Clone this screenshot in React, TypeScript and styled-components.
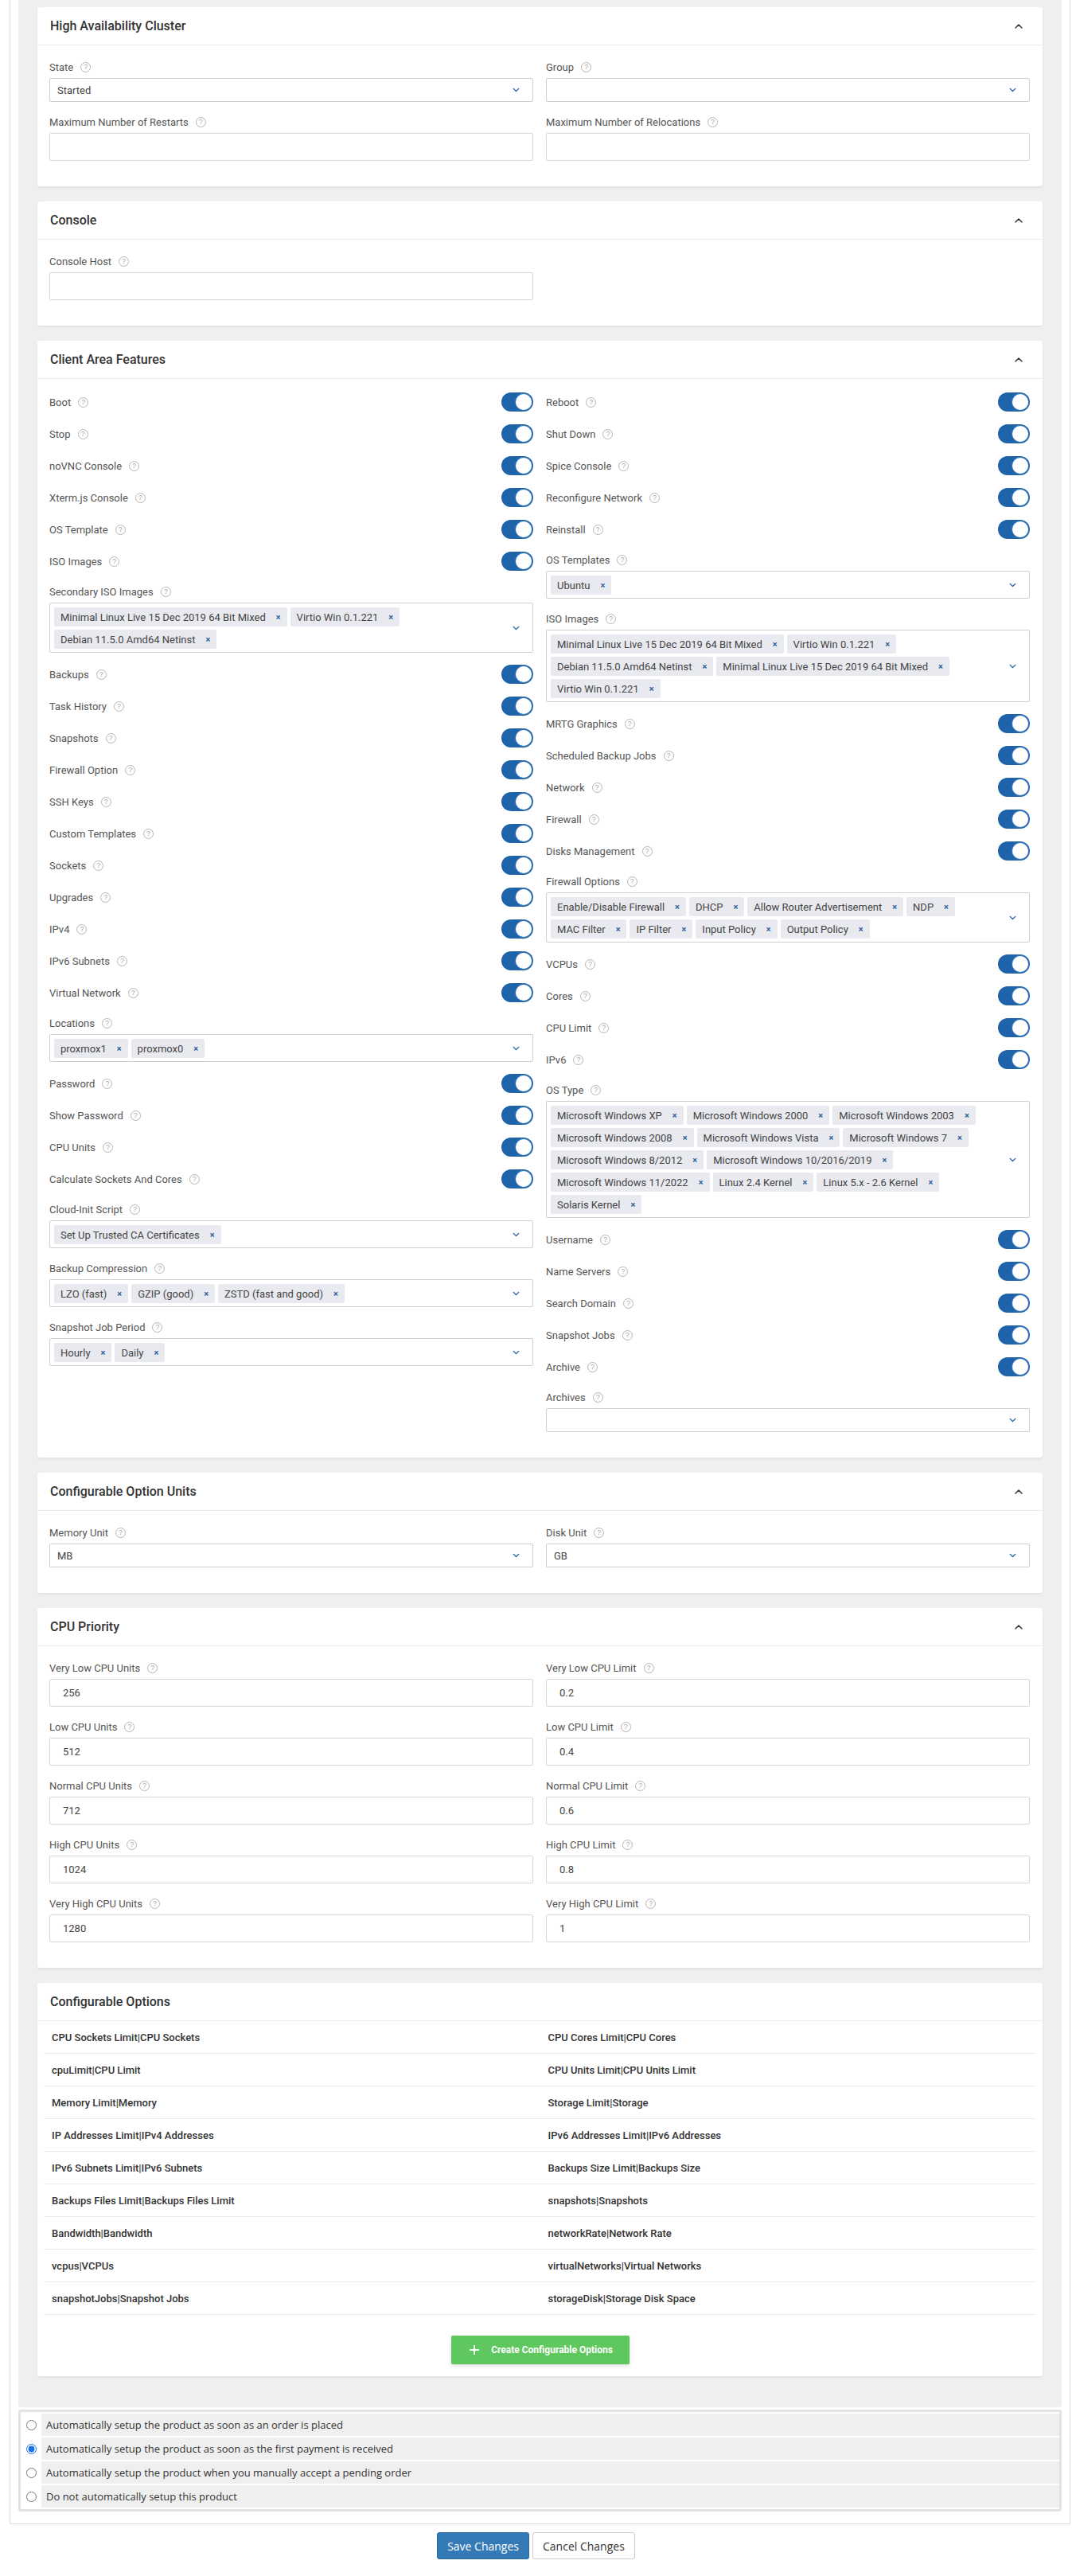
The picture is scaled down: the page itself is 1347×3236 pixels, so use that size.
import React from "react";
import styled, { createGlobalStyle } from "styled-components";
import { ChevronUp, ChevronDown, Plus } from "lucide-react";

const Global = createGlobalStyle`
  html, body { margin: 0; padding: 0; background: #fff; }
  body { font-family: Roboto, "Liberation Sans", sans-serif; color: #555; }
  * { box-sizing: border-box; }
`;

const Panel = styled.div`
  margin: 0 2px 0 12px;
  border-left: 1px solid #ddd;
  border-right: 1px solid #ddd;
  border-bottom: 1px solid #ddd;
  padding: 0 10px 15px 10px;
`;

const Grey = styled.div`
  background: #efefef;
  padding: 9px 24px 39px 24px;
  border-radius: 0 0 4px 4px;
  display: flex;
  flex-direction: column;
  gap: 19px;
`;

const Card = styled.section`
  background: #fff;
  border-radius: 3px;
  box-shadow: 0 2px 3px rgba(0, 0, 0, 0.06);
`;

const CardHeader = styled.div`
  height: 48px;
  display: flex;
  align-items: center;
  justify-content: space-between;
  padding: 0 22px 0 16px;
  border-bottom: 1px solid #ececec;
`;

const Title = styled.h3`
  margin: 0;
  font-size: 16px;
  font-weight: 500;
  color: #333;
`;

const Body = styled.div`
  display: grid;
  grid-template-columns: 1fr 1fr;
  column-gap: 16px;
  padding: 9px 16px 25px 15px;
  align-items: start;
`;

const Col = styled.div`
  display: flex;
  flex-direction: column;
`;

const LabelText = styled.span`
  font-size: 13px;
  color: #555;
  display: inline-flex;
  align-items: center;
  gap: 9px;
`;

const Help = styled.span`
  width: 13px;
  height: 13px;
  border: 1px solid #b5b5b5;
  border-radius: 50%;
  font-size: 9px;
  line-height: 11px;
  text-align: center;
  color: #aaa;
  font-family: "Liberation Sans", sans-serif;
`;

const Label = ({ t }: { t: string }) => (
  <LabelText>
    {t}
    <Help>?</Help>
  </LabelText>
);

const ToggleRowWrap = styled.div`
  height: 40px;
  display: flex;
  align-items: center;
  justify-content: space-between;
`;

const Switch = styled.span`
  width: 40px;
  height: 24px;
  border-radius: 12px;
  background: #1f63aa;
  display: flex;
  align-items: center;
  justify-content: flex-end;
  padding: 2px;
  &::after {
    content: "";
    width: 20px;
    height: 20px;
    border-radius: 50%;
    background: #fff;
    box-shadow: 0 0 0 1px #3a78bb;
  }
`;

const Toggle = ({ t }: { t: string }) => (
  <ToggleRowWrap>
    <Label t={t} />
    <Switch />
  </ToggleRowWrap>
);

const FieldWrap = styled.div`
  padding-top: 8px;
  margin-bottom: 7px;
  display: flex;
  flex-direction: column;
  gap: 4px;
`;

const LabelLine = styled.div`
  height: 20px;
  display: flex;
  align-items: center;
`;

const Box = styled.div<{ $h?: number; $tags?: boolean }>`
  border: 1px solid #cfcfcf;
  border-radius: 2px;
  min-height: ${(p) => p.$h || 30}px;
  position: relative;
  display: flex;
  flex-wrap: wrap;
  align-items: center;
  padding: ${(p) => (p.$tags ? "3px 40px 2px 5px" : "0 40px 0 9px")};
  font-size: 13px;
  color: #444;
`;

const Chevron = styled.span`
  position: absolute;
  right: 14px;
  top: 50%;
  transform: translateY(-50%);
  display: flex;
  color: #1f5fa5;
`;

const Tag = styled.span`
  height: 24px;
  margin: 2px 4px 2px 0;
  background: #e9eaf0;
  border-radius: 2px;
  padding: 0 8px;
  display: inline-flex;
  align-items: center;
  gap: 13px;
  font-size: 13px;
  color: #444;
  white-space: nowrap;
`;

const TagX = styled.span`
  color: #2a5fa0;
  font-size: 11px;
  font-weight: 700;
`;

const Inp = styled.div`
  border: 1px solid #d6d6dc;
  border-radius: 2px;
  height: 35px;
  display: flex;
  align-items: center;
  padding-left: 16px;
  font-size: 13px;
  color: #444;
`;

type Item =
  | { k: "t"; t: string }
  | { k: "m"; t: string; tags: string[] }
  | { k: "s"; t: string; v: string }
  | { k: "i"; t: string; v?: string };

const Field = ({ it }: { it: Item }) => {
  if (it.k === "t") return <Toggle t={it.t} />;
  return (
    <FieldWrap>
      <LabelLine>
        <Label t={it.t} />
      </LabelLine>
      {it.k === "m" && (
        <Box $tags $h={it.tags.length ? 35 : 30}>
          {it.tags.map((g, i) => (
            <Tag key={i}>
              {g}
              <TagX>×</TagX>
            </Tag>
          ))}
          <Chevron>
            <ChevronDown size={13} strokeWidth={2.5} />
          </Chevron>
        </Box>
      )}
      {it.k === "s" && (
        <Box>
          {it.v}
          <Chevron>
            <ChevronDown size={13} strokeWidth={2.5} />
          </Chevron>
        </Box>
      )}
      {it.k === "i" && <Inp>{it.v || ""}</Inp>}
    </FieldWrap>
  );
};

const t = (s: string): Item => ({ k: "t", t: s });
const m = (s: string, tags: string[]): Item => ({ k: "m", t: s, tags });

const Section = ({ title, left, right }: { title: string; left: Item[]; right: Item[] }) => (
  <Card>
    <CardHeader>
      <Title>{title}</Title>
      <ChevronUp size={16} strokeWidth={2.2} color="#333" />
    </CardHeader>
    <Body>
      <Col>{left.map((it, i) => <Field key={i} it={it} />)}</Col>
      <Col>{right.map((it, i) => <Field key={i} it={it} />)}</Col>
    </Body>
  </Card>
);

const ML = "Minimal Linux Live 15 Dec 2019 64 Bit Mixed";
const VW = "Virtio Win 0.1.221";
const DB = "Debian 11.5.0 Amd64 Netinst";

const caLeft: Item[] = [
  t("Boot"), t("Stop"), t("noVNC Console"), t("Xterm.js Console"), t("OS Template"), t("ISO Images"),
  m("Secondary ISO Images", [ML, VW, DB]),
  t("Backups"), t("Task History"), t("Snapshots"), t("Firewall Option"), t("SSH Keys"), t("Custom Templates"),
  t("Sockets"), t("Upgrades"), t("IPv4"), t("IPv6 Subnets"), t("Virtual Network"),
  m("Locations", ["proxmox1", "proxmox0"]),
  t("Password"), t("Show Password"), t("CPU Units"), t("Calculate Sockets And Cores"),
  m("Cloud-Init Script", ["Set Up Trusted CA Certificates"]),
  m("Backup Compression", ["LZO (fast)", "GZIP (good)", "ZSTD (fast and good)"]),
  m("Snapshot Job Period", ["Hourly", "Daily"]),
];

const caRight: Item[] = [
  t("Reboot"), t("Shut Down"), t("Spice Console"), t("Reconfigure Network"), t("Reinstall"),
  m("OS Templates", ["Ubuntu"]),
  m("ISO Images", [ML, VW, DB, ML, VW]),
  t("MRTG Graphics"), t("Scheduled Backup Jobs"), t("Network"), t("Firewall"), t("Disks Management"),
  m("Firewall Options", ["Enable/Disable Firewall", "DHCP", "Allow Router Advertisement", "NDP", "MAC Filter", "IP Filter", "Input Policy", "Output Policy"]),
  t("VCPUs"), t("Cores"), t("CPU Limit"), t("IPv6"),
  m("OS Type", [
    "Microsoft Windows XP", "Microsoft Windows 2000", "Microsoft Windows 2003", "Microsoft Windows 2008",
    "Microsoft Windows Vista", "Microsoft Windows 7", "Microsoft Windows 8/2012", "Microsoft Windows 10/2016/2019",
    "Microsoft Windows 11/2022", "Linux 2.4 Kernel", "Linux 5.x - 2.6 Kernel", "Solaris Kernel",
  ]),
  t("Username"), t("Name Servers"), t("Search Domain"), t("Snapshot Jobs"), t("Archive"),
  m("Archives", []),
];

const cpuLeft: Item[] = [
  { k: "i", t: "Very Low CPU Units", v: "256" },
  { k: "i", t: "Low CPU Units", v: "512" },
  { k: "i", t: "Normal CPU Units", v: "712" },
  { k: "i", t: "High CPU Units", v: "1024" },
  { k: "i", t: "Very High CPU Units", v: "1280" },
];
const cpuRight: Item[] = [
  { k: "i", t: "Very Low CPU Limit", v: "0.2" },
  { k: "i", t: "Low CPU Limit", v: "0.4" },
  { k: "i", t: "Normal CPU Limit", v: "0.6" },
  { k: "i", t: "High CPU Limit", v: "0.8" },
  { k: "i", t: "Very High CPU Limit", v: "1" },
];

const opts: [string, string][] = [
  ["CPU Sockets Limit|CPU Sockets", "CPU Cores Limit|CPU Cores"],
  ["cpuLimit|CPU Limit", "CPU Units Limit|CPU Units Limit"],
  ["Memory Limit|Memory", "Storage Limit|Storage"],
  ["IP Addresses Limit|IPv4 Addresses", "IPv6 Addresses Limit|IPv6 Addresses"],
  ["IPv6 Subnets Limit|IPv6 Subnets", "Backups Size Limit|Backups Size"],
  ["Backups Files Limit|Backups Files Limit", "snapshots|Snapshots"],
  ["Bandwidth|Bandwidth", "networkRate|Network Rate"],
  ["vcpus|VCPUs", "virtualNetworks|Virtual Networks"],
  ["snapshotJobs|Snapshot Jobs", "storageDisk|Storage Disk Space"],
];

const OptList = styled.div`
  padding: 0 8px;
`;
const OptRow = styled.div`
  display: grid;
  grid-template-columns: 1fr 1fr;
  height: 41px;
  align-items: center;
  border-bottom: 1px solid #ececec;
`;
const OptCell = styled.div`
  padding-left: 10px;
  font-size: 13px;
  font-weight: 500;
  color: #333;
`;
const BtnRow = styled.div`
  display: flex;
  justify-content: center;
  padding: 26px 0 15px;
`;
const GreenBtn = styled.button`
  height: 36px;
  width: 224px;
  border: none;
  border-radius: 2px;
  background: #5ec85e;
  color: #fff;
  font-family: Roboto, sans-serif;
  font-weight: 700;
  font-size: 12px;
  display: flex;
  align-items: center;
  justify-content: center;
  gap: 12px;
  box-shadow: 0 2px 4px rgba(0, 0, 0, 0.15);
`;

const RadioTable = styled.div`
  margin: 3px 0 0 0;
  border: 3px solid #e1e4e6;
  border-radius: 3px;
  display: flex;
  flex-direction: column;
  gap: 2px;
  padding: 2px 0;
  background: #fff;
`;
const RadioRow = styled.label`
  display: flex;
  height: 28px;
`;
const RadioCell = styled.span`
  width: 26px;
  display: flex;
  align-items: center;
  justify-content: center;
  input { margin: 0; width: 13px; height: 13px; accent-color: #1a73e8; }
`;
const RadioText = styled.span`
  flex: 1;
  background: #efefef;
  display: flex;
  align-items: center;
  padding-left: 6px;
  font-family: "Open Sans", sans-serif;
  font-size: 13px;
  color: #333;
`;

const Footer = styled.div`
  display: flex;
  justify-content: center;
  gap: 4px;
  padding: 10px 0 11px;
`;
const Btn = styled.button<{ $primary?: boolean }>`
  height: 34px;
  padding: 0 12px;
  font-family: "Open Sans", sans-serif;
  font-size: 14px;
  border-radius: 3px;
  border: 1px solid ${(p) => (p.$primary ? "#2e6da4" : "#ccc")};
  background: ${(p) => (p.$primary ? "#337ab7" : "#fff")};
  color: ${(p) => (p.$primary ? "#fff" : "#333")};
`;

const radios = [
  "Automatically setup the product as soon as an order is placed",
  "Automatically setup the product as soon as the first payment is received",
  "Automatically setup the product when you manually accept a pending order",
  "Do not automatically setup this product",
];

export default function App() {
  return (
    <>
      <Global />
      <Panel>
        <Grey>
          <Section
            title="High Availability Cluster"
            left={[{ k: "s", t: "State", v: "Started" }, { k: "i", t: "Maximum Number of Restarts" }]}
            right={[{ k: "s", t: "Group", v: "" }, { k: "i", t: "Maximum Number of Relocations" }]}
          />
          <Section title="Console" left={[{ k: "i", t: "Console Host" }]} right={[]} />
          <Section title="Client Area Features" left={caLeft} right={caRight} />
          <Section
            title="Configurable Option Units"
            left={[{ k: "s", t: "Memory Unit", v: "MB" }]}
            right={[{ k: "s", t: "Disk Unit", v: "GB" }]}
          />
          <Section title="CPU Priority" left={cpuLeft} right={cpuRight} />
          <Card>
            <CardHeader>
              <Title>Configurable Options</Title>
            </CardHeader>
            <OptList>
              {opts.map(([a, b], i) => (
                <OptRow key={i}>
                  <OptCell>{a}</OptCell>
                  <OptCell>{b}</OptCell>
                </OptRow>
              ))}
            </OptList>
            <BtnRow>
              <GreenBtn>
                <Plus size={18} strokeWidth={2.5} />
                Create Configurable Options
              </GreenBtn>
            </BtnRow>
          </Card>
        </Grey>
        <RadioTable>
          {radios.map((r, i) => (
            <RadioRow key={i}>
              <RadioCell>
                <input type="radio" name="autosetup" defaultChecked={i === 1} />
              </RadioCell>
              <RadioText>{r}</RadioText>
            </RadioRow>
          ))}
        </RadioTable>
      </Panel>
      <Footer>
        <Btn $primary>Save Changes</Btn>
        <Btn>Cancel Changes</Btn>
      </Footer>
    </>
  );
}
